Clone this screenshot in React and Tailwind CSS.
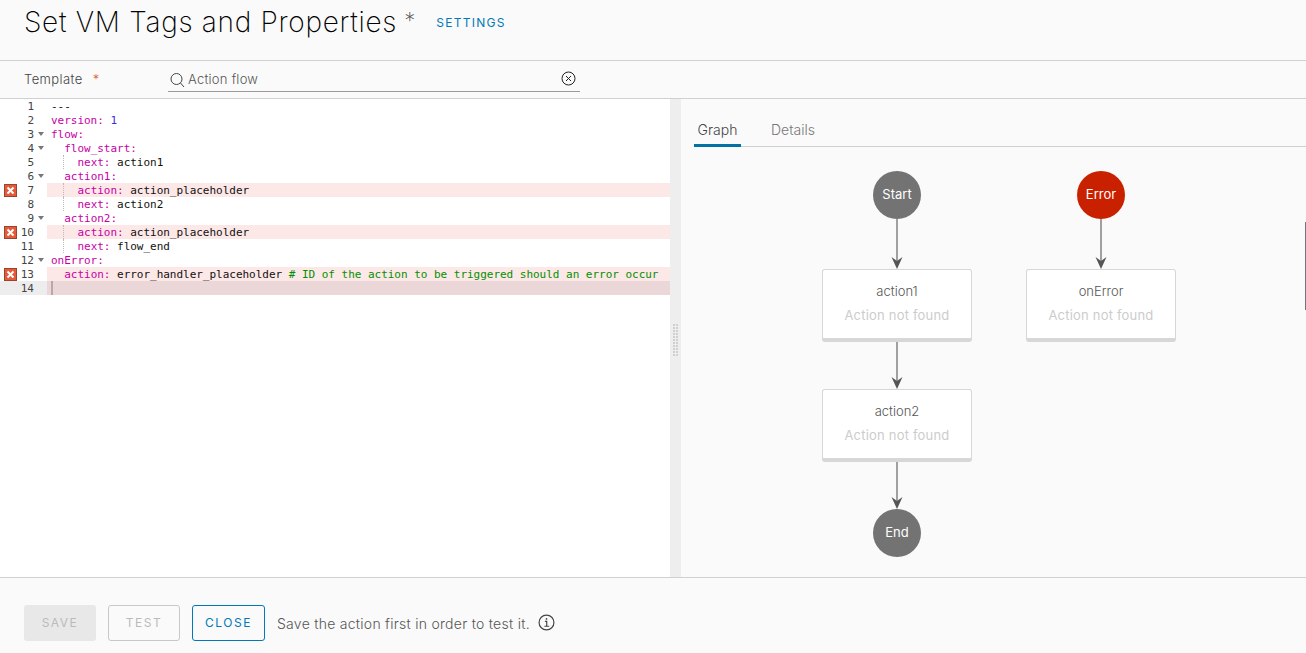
import React from "react";

const K = ({ children }) => <span className="text-[#c800a4]">{children}</span>;
const lines = [
  { c: <span>---</span> },
  { c: <><K>version:</K> <span className="text-[#3a2de0]">1</span></> },
  { c: <K>flow:</K>, fold: true },
  { c: <>  <K>flow_start:</K></>, fold: true },
  { c: <>    <K>next:</K> action1</>, guide: true },
  { c: <>  <K>action1:</K></>, fold: true },
  { c: <>    <K>action:</K> action_placeholder</>, guide: true, err: true },
  { c: <>    <K>next:</K> action2</>, guide: true },
  { c: <>  <K>action2:</K></>, fold: true },
  { c: <>    <K>action:</K> action_placeholder</>, guide: true, err: true },
  { c: <>    <K>next:</K> flow_end</>, guide: true },
  { c: <K>onError:</K>, fold: true },
  { c: <>  <K>action:</K> error_handler_placeholder <span className="text-[#009000]"># ID of the action to be triggered should an error occur</span></>, err: true },
  { c: <span className="inline-block w-[2px] h-[14px] bg-[#b8a8a8] align-top" />, active: true },
];

function ErrorIcon() {
  return (
    <svg className="absolute left-[4px] top-[1px]" width="13" height="13" viewBox="0 0 13 13" shapeRendering="crispEdges">
      <rect x="0.5" y="0.5" width="12" height="12" fill="#e8593a" stroke="#94472f" />
      <path d="M3.5 3.5 L9.5 9.5 M9.5 3.5 L3.5 9.5" stroke="#fff" strokeWidth="2" shapeRendering="auto" />
    </svg>
  );
}

function CodeLine({ line, n }) {
  return (
    <div className="flex h-[14px] leading-[16px]">
      <div className={`relative w-[47px] shrink-0 h-[14px] ${line.active ? "bg-[#ededed]" : ""}`}>
        {line.err && <ErrorIcon />}
        <span className="absolute right-[13px] top-0 text-[#444]">{n}</span>
        {line.fold && (
          <svg className="absolute left-[38px] top-[5px]" width="6" height="4" viewBox="0 0 6 4">
            <path d="M0 0 H6 L3 4 Z" fill="#777" />
          </svg>
        )}
      </div>
      <div className={`relative flex-1 pl-[4px] whitespace-pre tracking-[-0.02px] text-[#111] ${line.err ? "bg-[#fde8e8]" : ""} ${line.active ? "bg-[#ecd7d8]" : ""}`}>
        {line.guide && <span className="absolute left-[16px] top-0 h-[14px] border-l border-dotted border-[#bbb]" />}
        {line.c}
      </div>
    </div>
  );
}

function Arrow({ x, y1, y2 }) {
  const h = y2 - y1;
  return (
    <svg className="absolute" style={{ left: x - 8, top: y1 }} width="16" height={h} viewBox={`0 0 16 ${h}`}>
      <line x1="8" y1="0" x2="8" y2={h - 6} stroke="#a0a0a0" strokeWidth="2" />
      <path d={`M2.5 ${h - 12} L8 ${h - 8} L13.5 ${h - 12} L8 ${h} Z`} fill="#565656" />
    </svg>
  );
}

function Circle({ x, y, label, color }) {
  return (
    <div
      className={`absolute w-[48px] h-[48px] rounded-full flex items-center justify-center text-white text-[13px] ${color}`}
      style={{ left: x - 24, top: y - 24 }}
    >
      {label}
    </div>
  );
}

function Card({ x, y, title }) {
  return (
    <div
      className="absolute w-[150px] h-[73px] bg-white border border-[#d7d7d7] border-b-[4px] rounded-[3px] flex flex-col items-center"
      style={{ left: x, top: y }}
    >
      <div className="mt-[12px] text-[13px] leading-[18px] font-light text-[#555]">{title}</div>
      <div className="mt-[6px] text-[13px] leading-[18px] tracking-[0.2px] text-[#ccc]">Action not found</div>
    </div>
  );
}

export default function App() {
  return (
    <div className="relative w-[1306px] h-[653px] flex flex-col overflow-hidden bg-[#fafafa] text-[#333]" style={{ fontFamily: "Inter, sans-serif" }}>
      <div className="h-[61px] shrink-0 flex items-start pl-[24px] pt-[5px] border-b border-[#d0d0d0]">
        <h1 className="text-[28px] leading-[34px] font-extralight text-black tracking-[0.7px]">Set VM Tags and Properties</h1>
        <span className="ml-[7px] text-[22px] leading-[30px] font-extralight text-[#555]">*</span>
        <a className="ml-[21px] mt-[10px] text-[12px] leading-[16px] tracking-[1.3px] text-[#0079b8]">SETTINGS</a>
      </div>
      <div className="h-[38px] shrink-0 flex items-center pl-[24px] border-b border-[#d0d0d0]">
        <div className="w-[144px] flex text-[13px] font-light tracking-[0.4px] text-[#444]">
          Template<span className="ml-[10px] text-[#e0562f]">*</span>
        </div>
        <div className="relative w-[412px] h-[24px] flex items-center border-b border-[#9a9a9a] mt-[1px]">
          <svg className="ml-[1px]" width="16" height="16" viewBox="0 0 16 16" fill="none" stroke="#444">
            <circle cx="7.5" cy="7" r="5.5" />
            <path d="M11.5 11 L15 15" />
          </svg>
          <span className="ml-[3px] text-[13px] font-light tracking-[0.25px] text-[#555]">Action flow</span>
          <svg className="absolute right-[4px] top-[3px]" width="15" height="15" viewBox="0 0 15 15" fill="none" stroke="#222">
            <circle cx="7.5" cy="7.5" r="6.5" />
            <path d="M5 5 L10 10 M10 5 L5 10" />
          </svg>
        </div>
      </div>
      <div className="flex-1 flex min-h-0">
        <div className="w-[670px] shrink-0 bg-white text-[11px]" style={{ fontFamily: "'DejaVu Sans Mono', monospace" }}>
          {lines.map((l, i) => <CodeLine key={i} line={l} n={i + 1} />)}
        </div>
        <div className="w-[11px] shrink-0 bg-[#eeeeee] flex items-center justify-center">
          <div className="grid grid-cols-2 gap-[1px] mt-[3px]">
            {Array.from({ length: 22 }).map((_, i) => (
              <span key={i} className="w-[2px] h-[2px] bg-[#d0d0d0]" />
            ))}
          </div>
        </div>
        <div className="flex-1 relative">
          <div className="mt-[21px] ml-[13px] h-[27px] flex items-start border-b border-[#d0d0d0] text-[14px] font-light">
            <div className="h-[27px] w-[47px] text-center border-b-[3px] border-[#0072a3] text-[#444] leading-[20px]">Graph</div>
            <div className="ml-[30px] text-[#777] leading-[20px]">Details</div>
          </div>
          <div className="absolute left-[-681px] top-[-99px] w-[1306px] h-[653px] pointer-events-none">
            <Arrow x={897} y1={219} y2={269} />
            <Arrow x={1101} y1={219} y2={269} />
            <Arrow x={897} y1={342} y2={389} />
            <Arrow x={897} y1={462} y2={509} />
            <Circle x={897} y={195} label="Start" color="bg-[#737373]" />
            <Circle x={1101} y={195} label="Error" color="bg-[#c92100]" />
            <Circle x={897} y={533} label="End" color="bg-[#737373]" />
            <Card x={822} y={269} title="action1" />
            <Card x={1026} y={269} title="onError" />
            <Card x={822} y={389} title="action2" />
          </div>
          <div className="absolute right-0 top-[123px] w-[1px] h-[88px] bg-[#6f7680]" />
        </div>
      </div>
      <div className="h-[76px] shrink-0 border-t border-[#d0d0d0] flex items-center pl-[24px] pt-[15px]">
        <button className="w-[72px] h-[36px] rounded-[3px] bg-[#e8e8e8] text-[12px] tracking-[1.5px] text-[#bbb]">SAVE</button>
        <button className="ml-[12px] w-[72px] h-[36px] rounded-[3px] border border-[#c8c8c8] text-[12px] tracking-[1.5px] text-[#bbb]">TEST</button>
        <button className="ml-[12px] w-[73px] h-[36px] rounded-[3px] border border-[#0079b8] text-[12px] tracking-[1.5px] text-[#0079b8]">CLOSE</button>
        <span className="ml-[12px] text-[14px] font-light tracking-[0.27px] text-[#565656]">Save the action first in order to test it.</span>
        <svg className="ml-[8px] mb-[1px]" width="17" height="17" viewBox="0 0 16 16" fill="none" stroke="#444" strokeWidth="1.1">
          <circle cx="8" cy="8" r="7" />
          <path d="M6.5 7 H8.2 V11.5 M6 11.5 H10.5" />
          <circle cx="8" cy="4.6" r="0.8" fill="#444" stroke="none" />
        </svg>
      </div>
    </div>
  );
}
